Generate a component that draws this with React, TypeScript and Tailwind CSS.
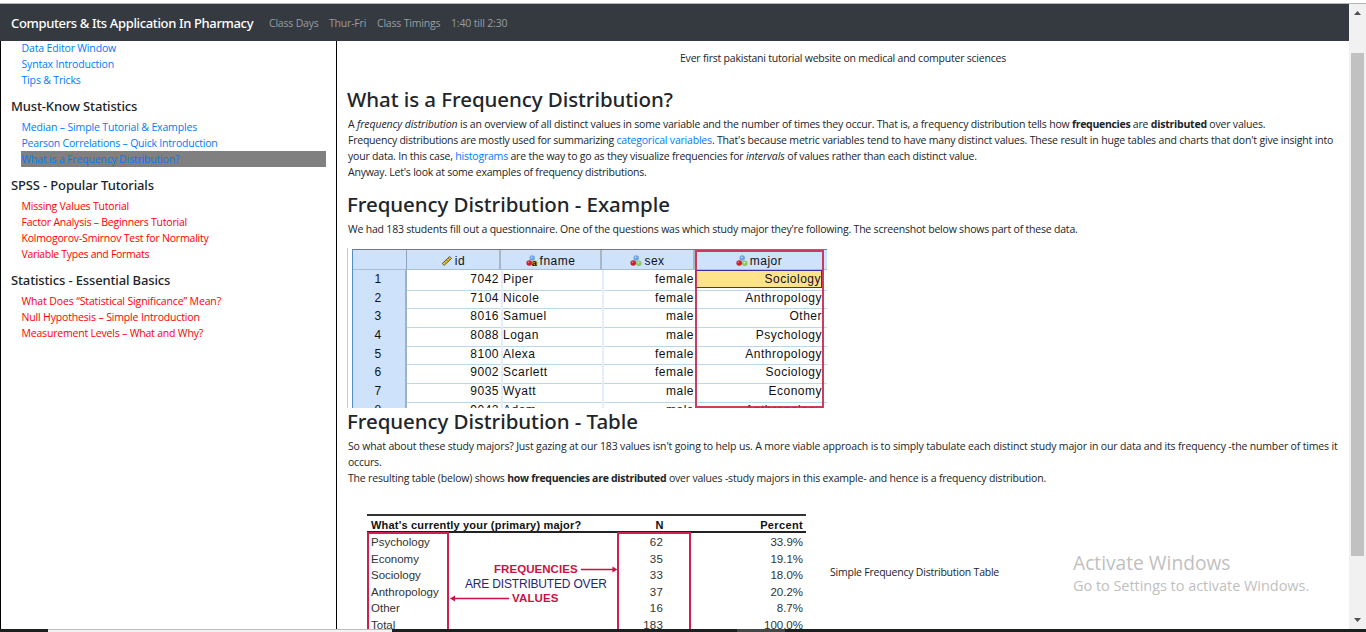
import React from "react";

type LinkItem = { label: string; className: string };

const blueLinks: LinkItem[] = [
  { label: "Data Editor Window", className: "tracking-[-0.16px]" },
  { label: "Syntax Introduction", className: "tracking-[-0.19px]" },
  { label: "Tips & Tricks", className: "tracking-[-0.16px]" },
];

const statLinks: LinkItem[] = [
  { label: "Median – Simple Tutorial & Examples", className: "tracking-[-0.154px]" },
  { label: "Pearson Correlations – Quick Introduction", className: "tracking-[-0.215px]" },
  { label: "What is a Frequency Distribution?", className: "tracking-[-0.18px] bg-[#808080]" },
];

const spssLinks: LinkItem[] = [
  { label: "Missing Values Tutorial", className: "tracking-[-0.2px]" },
  { label: "Factor Analysis – Beginners Tutorial", className: "tracking-[-0.21px]" },
  { label: "Kolmogorov-Smirnov Test for Normality", className: "tracking-[-0.19px]" },
  { label: "Variable Types and Formats", className: "tracking-[-0.3px]" },
];

const basicsLinks: LinkItem[] = [
  { label: "What Does “Statistical Significance” Mean?", className: "tracking-[-0.134px]" },
  { label: "Null Hypothesis – Simple Introduction", className: "tracking-[-0.16px]" },
  { label: "Measurement Levels – What and Why?", className: "tracking-[-0.19px]" },
];

function LinkList({ items, color }: { items: LinkItem[]; color: string }) {
  return (
    <ul className={`ml-5 mr-[10px] ${color}`}>
      {items.map((item) => (
        <li key={item.label} className={`h-4 pl-[0.5px] leading-4 ${item.className}`}>
          <a>{item.label}</a>
        </li>
      ))}
    </ul>
  );
}

function SideHeading({ children }: { children: React.ReactNode }) {
  return (
    <h2 className="h-[31px] pt-[9px] pl-[10px] font-['Noto_Sans',sans-serif] text-[13px] leading-[18px] font-medium tracking-[-0.14px] text-[#212529]">
      {children}
    </h2>
  );
}

function Title({ children, className }: { children: React.ReactNode; className: string }) {
  return (
    <h1
      className={`-ml-px font-['Noto_Sans',sans-serif] text-[20.5px] leading-6 font-medium tracking-[-0.07px] ${className}`}
    >
      {children}
    </h1>
  );
}

function NominalIcon({ text = false }: { text?: boolean }) {
  return (
    <svg width="12" height="12" viewBox="0 0 12 12">
      <circle cx="6.2" cy="3" r="2.7" fill="#6ba3df" />
      <circle cx="3.2" cy="8" r="2.8" fill="#c8202f" />
      <circle cx="8.8" cy="8.2" r="2.8" fill={text ? "#d9a526" : "#8fc866"} />
      <circle cx="5.6" cy="2.4" r="0.9" fill="#b9d7f5" />
      <circle cx="2.5" cy="7.2" r="0.8" fill="#f08a90" />
      {text ? (
        <text x="5.8" y="10.8" fontSize="9" fontWeight="700" fontFamily="Liberation Sans" fill="#111">
          a
        </text>
      ) : (
        <circle cx="8.4" cy="7.6" r="0.9" fill="#d5efc0" />
      )}
    </svg>
  );
}

function RulerIcon() {
  return (
    <svg width="12" height="12" viewBox="0 0 12 12">
      <path d="M1.2 8.6 8.6 1.6 10.6 3.4 3.2 10.4Z" fill="#e5c53a" stroke="#5f500f" strokeWidth="0.9" />
      <path d="M3.4 6.6l1.1 1.1M5.3 4.8l1.1 1.1M7.2 3.1l1.1 1.1" stroke="#4c400c" strokeWidth="0.8" />
    </svg>
  );
}

const students: [string, string, string, string, string][] = [
  ["1", "7042", "Piper", "female", "Sociology"],
  ["2", "7104", "Nicole", "female", "Anthropology"],
  ["3", "8016", "Samuel", "male", "Other"],
  ["4", "8088", "Logan", "male", "Psychology"],
  ["5", "8100", "Alexa", "female", "Anthropology"],
  ["6", "9002", "Scarlett", "female", "Sociology"],
  ["7", "9035", "Wyatt", "male", "Economy"],
  ["8", "9042", "Adam", "male", "Anthropology"],
];

const sheetCols = "grid grid-cols-[54px_94px_101px_93px_132px]";

function DataSheet() {
  const head = "flex items-center justify-center gap-[2px] border-r-2 border-[#a9b6c6] pt-[3px]";
  return (
    <div className="relative h-40 w-[480px] overflow-hidden border-l border-[#cccccc] pt-px pl-1 font-['Liberation_Sans',Arial,sans-serif] text-[12px] tracking-[0.5px] text-[#111]">
      <div className="border-l border-[#4f8fc9]">
        <div className={`${sheetCols} h-[21px] border-t border-b border-t-[#3f87c7] border-b-[#a9bdd3] bg-[#cfe2fb]`}>
          <div className="border-r border-[#8fa4bb]" />
          <div className={head}><RulerIcon /><span>id</span></div>
          <div className={head}><NominalIcon text /><span>fname</span></div>
          <div className={`${head} border-r-0`}><NominalIcon /><span>sex</span></div>
          <div className="flex items-center justify-center gap-[2px] pt-[3px] pr-1"><NominalIcon /><span>major</span></div>
        </div>
        {students.map(([row, id, name, sex, major]) => (
          <div key={row} className={`${sheetCols} h-[18.67px] leading-[18.6px]`}>
            <div className="border-r-2 border-b-2 border-r-[#9fb2c8] border-b-[#a9bacd] bg-[#cfe2fb] pr-0.5 text-center">{row}</div>
            <div className="border-b border-[#bcd7ea] pr-[2px] text-right">{id}</div>
            <div className="border-b border-l-2 border-[#bcd7ea] border-l-[#e4eefa] text-left">{name}</div>
            <div className="border-b border-l-2 border-[#bcd7ea] border-l-[#e4eefa] pr-[1px] text-right">{sex}</div>
            <div className="border-b border-[#bcd7ea] pr-[5px] text-right">
              <div className={row === "1" ? "h-[18px] border border-[#3a2f9c] bg-[#ffe38c] leading-[17px]" : ""}>{major}</div>
            </div>
          </div>
        ))}
      </div>
      <div className="absolute top-[2px] left-[347px] h-[158px] w-[129px] border-2 border-[#c9284e]/90" />
    </div>
  );
}

const majors = ["Psychology", "Economy", "Sociology", "Anthropology", "Other", "Total"];
const counts = ["62", "35", "33", "37", "16", "183"];
const percents = ["33.9%", "19.1%", "18.0%", "20.2%", "8.7%", "100.0%"];

function Cells({ values }: { values: string[] }) {
  return (
    <>
      {values.map((v) => (
        <div key={v} className="h-[16.6px] leading-[17px]">{v}</div>
      ))}
    </>
  );
}

function FrequencyTable() {
  return (
    <div className="h-[130px] w-[439px] shrink-0 font-['Liberation_Sans',Arial,sans-serif] text-[11.5px] text-[#333]">
      <div className="flex h-[19px] border-t-2 border-b-2 border-t-[#333] border-b-[#222] pt-px text-[11px] leading-[17px] font-bold text-[#111]">
        <div className="w-[284px] pl-1 tracking-[0.19px] whitespace-nowrap">What's currently your (primary) major?</div>
        <div className="w-[17px] text-center tracking-[0.3px]">N</div>
        <div className="flex-1 pr-[3px] text-right tracking-[0.35px]">Percent</div>
      </div>
      <div className="-mt-px flex h-[112px]">
        <div className="w-[82px] border-2 border-[#d1204f] pl-[2px] tracking-[0px]">
          <Cells values={majors} />
        </div>
        <div className="w-[168px] pt-[30px]">
          <div className="flex h-[15px] items-center leading-[15px] font-bold text-[#cc1243]">
            <span className="ml-[45px] tracking-[0.05px]">FREQUENCIES</span>
            <svg className="ml-[3px]" width="37" height="7" viewBox="0 0 37 7">
              <path d="M0 3.5H33" stroke="#cc1243" strokeWidth="1.3" />
              <path d="M32 0.5 37 3.5 32 6.5Z" fill="#cc1243" />
            </svg>
          </div>
          <div className="ml-[16px] h-[14px] text-[12px] leading-[14px] tracking-[-0.18px] whitespace-nowrap text-[#26267d]">ARE DISTRIBUTED OVER</div>
          <div className="flex h-[15px] items-center leading-[15px] font-bold text-[#cc1243]">
            <svg width="60" height="7" viewBox="0 0 60 7">
              <path d="M4 3.5H60" stroke="#cc1243" strokeWidth="1.3" />
              <path d="M6 0.5 1 3.5 6 6.5Z" fill="#cc1243" />
            </svg>
            <span className="ml-[3px] tracking-[0.15px]">VALUES</span>
          </div>
        </div>
        <div className="w-[74px] border-2 border-[#d1204f] pr-[26px] text-right tracking-[0.2px]">
          <Cells values={counts} />
        </div>
        <div className="flex-1 pt-[2px] pr-[3px] text-right tracking-[0px]">
          <Cells values={percents} />
        </div>
      </div>
    </div>
  );
}

function ScrollBar() {
  return (
    <div className="flex w-[17px] shrink-0 flex-col items-center bg-[#f1f1f1]">
      <svg className="mt-[7px]" width="7" height="4" viewBox="0 0 7 4">
        <path d="M0 4 3.5 0 7 4Z" fill="#505050" />
      </svg>
      <div className="mt-[38px] h-[503px] w-[13px] bg-[#c1c1c1]" />
      <svg className="mt-[62px]" width="7" height="4" viewBox="0 0 7 4">
        <path d="M0 0 3.5 4 7 0Z" fill="#505050" />
      </svg>
    </div>
  );
}

export default function App() {
  return (
    <div className="relative flex h-[632px] w-[1366px] flex-col overflow-hidden bg-white font-['Open_Sans','Noto_Sans',sans-serif] text-[10.5px] text-[#212529]">
      <div className="h-1 shrink-0 border-b border-[#b4b4b4]" />
      <div className="flex h-[625px] shrink-0">
        <div className="flex w-[1349px] flex-col">
          <nav className="flex h-[37px] shrink-0 items-center bg-[#343a40] pt-[2px] pl-[11px] whitespace-nowrap text-[#9a9da0]">
            <span className="w-[258px] font-['Noto_Sans',sans-serif] text-[13px] font-medium tracking-[-0.36px] text-white">Computers &amp; Its Application In Pharmacy</span>
            <span className="w-[60px] tracking-[-0.2px]">Class Days</span>
            <span className="w-12 tracking-[-0.2px]">Thur-Fri</span>
            <span className="w-[74px] tracking-[-0.2px]">Class Timings</span>
            <span className="tracking-[-0.17px]">1:40 till 2:30</span>
          </nav>
          <div className="flex h-[588px]">
            <aside className="w-[337px] shrink-0 overflow-hidden border-x border-black whitespace-nowrap">
              <div className="-mt-px">
                <LinkList items={blueLinks} color="text-[#007bff]" />
                <SideHeading>Must-Know Statistics</SideHeading>
                <LinkList items={statLinks} color="text-[#007bff]" />
                <SideHeading>SPSS - Popular Tutorials</SideHeading>
                <LinkList items={spssLinks} color="text-[#ff0000]" />
                <SideHeading>Statistics - Essential Basics</SideHeading>
                <LinkList items={basicsLinks} color="text-[#ff0000]" />
              </div>
            </aside>
            <main className="h-[588px] w-[1012px] overflow-hidden pt-[9px] leading-4 whitespace-nowrap">
              <p className="text-center tracking-[-0.215px]">Ever first pakistani tutorial website on medical and computer sciences</p>
              <div className="pl-[11px]">
                <Title className="mt-[21px]">What is a Frequency Distribution?</Title>
                <div className="mt-[5px]">
                  <p className="tracking-[-0.197px]">
                    A <em className="tracking-[-0.07px]">frequency distribution</em> is an overview of all distinct values in some variable and the number of times they occur. That is, a frequency distribution tells how <b className="tracking-[-0.31px]">frequencies</b> are <b className="tracking-[-0.23px]">distributed</b> over values.
                  </p>
                  <p className="tracking-[-0.2px]">
                    <span className="tracking-[-0.24px]">Frequency distributions are mostly used for summarizing </span>
                    <a className="text-[#007bff]">categorical variables</a>. <span className="tracking-[-0.18px]">That's because metric variables tend to have many distinct values. These result in huge tables and charts that don't give insight into</span>
                  </p>
                  <p className="tracking-[-0.2px]">
                    your data. In this case, <a className="text-[#007bff]">histograms</a> are the way to go as they visualize frequencies for <em className="tracking-[-0.07px]">intervals</em> of values rather than each distinct value.
                  </p>
                  <p className="tracking-[-0.22px]">Anyway. Let's look at some examples of frequency distributions.</p>
                </div>
                <Title className="mt-3">Frequency Distribution - Example</Title>
                <p className="mt-[5px] tracking-[-0.202px]">We had 183 students fill out a questionnaire. One of the questions was which study major they're following. The screenshot below shows part of these data.</p>
                <div className="mt-[11px] -ml-px">
                  <DataSheet />
                </div>
                <Title className="mt-px">Frequency Distribution - Table</Title>
                <div className="mt-[5px]">
                  <p className="tracking-[-0.158px]">So what about these study majors? Just gazing at our 183 values isn't going to help us. A more viable approach is to simply tabulate each distinct study major in our data and its frequency -the number of times it</p>
                  <p className="tracking-[-0.2px]">occurs.</p>
                  <p className="tracking-[-0.19px]">
                    The resulting table (below) shows <b className="tracking-[-0.29px]">how frequencies are distributed</b> over values -study majors in this example- and hence is a frequency distribution.
                  </p>
                </div>
                <div className="mt-[28px] ml-[19px] flex items-start">
                  <FrequencyTable />
                  <span className="mt-[50px] ml-6 tracking-[-0.226px]">Simple Frequency Distribution Table</span>
                </div>
              </div>
            </main>
          </div>
        </div>
        <ScrollBar />
      </div>
      <div className="flex h-[3px] shrink-0 bg-[#1b1f1f]">
        <div className="ml-12 h-[3px] w-[344px] border-t border-[#bdbdbd] bg-[#f3f3f3]" />
        <div className="ml-[345px] h-[3px] w-12 bg-[#444747]" />
      </div>
      <div className="absolute top-[550px] left-[1073px] whitespace-nowrap text-[#bfbfbf]">
        <div className="text-[19.2px] leading-[26px]">Activate Windows</div>
        <div className="text-[14.5px] leading-5 tracking-[-0.04px]">Go to Settings to activate Windows.</div>
      </div>
    </div>
  );
}
